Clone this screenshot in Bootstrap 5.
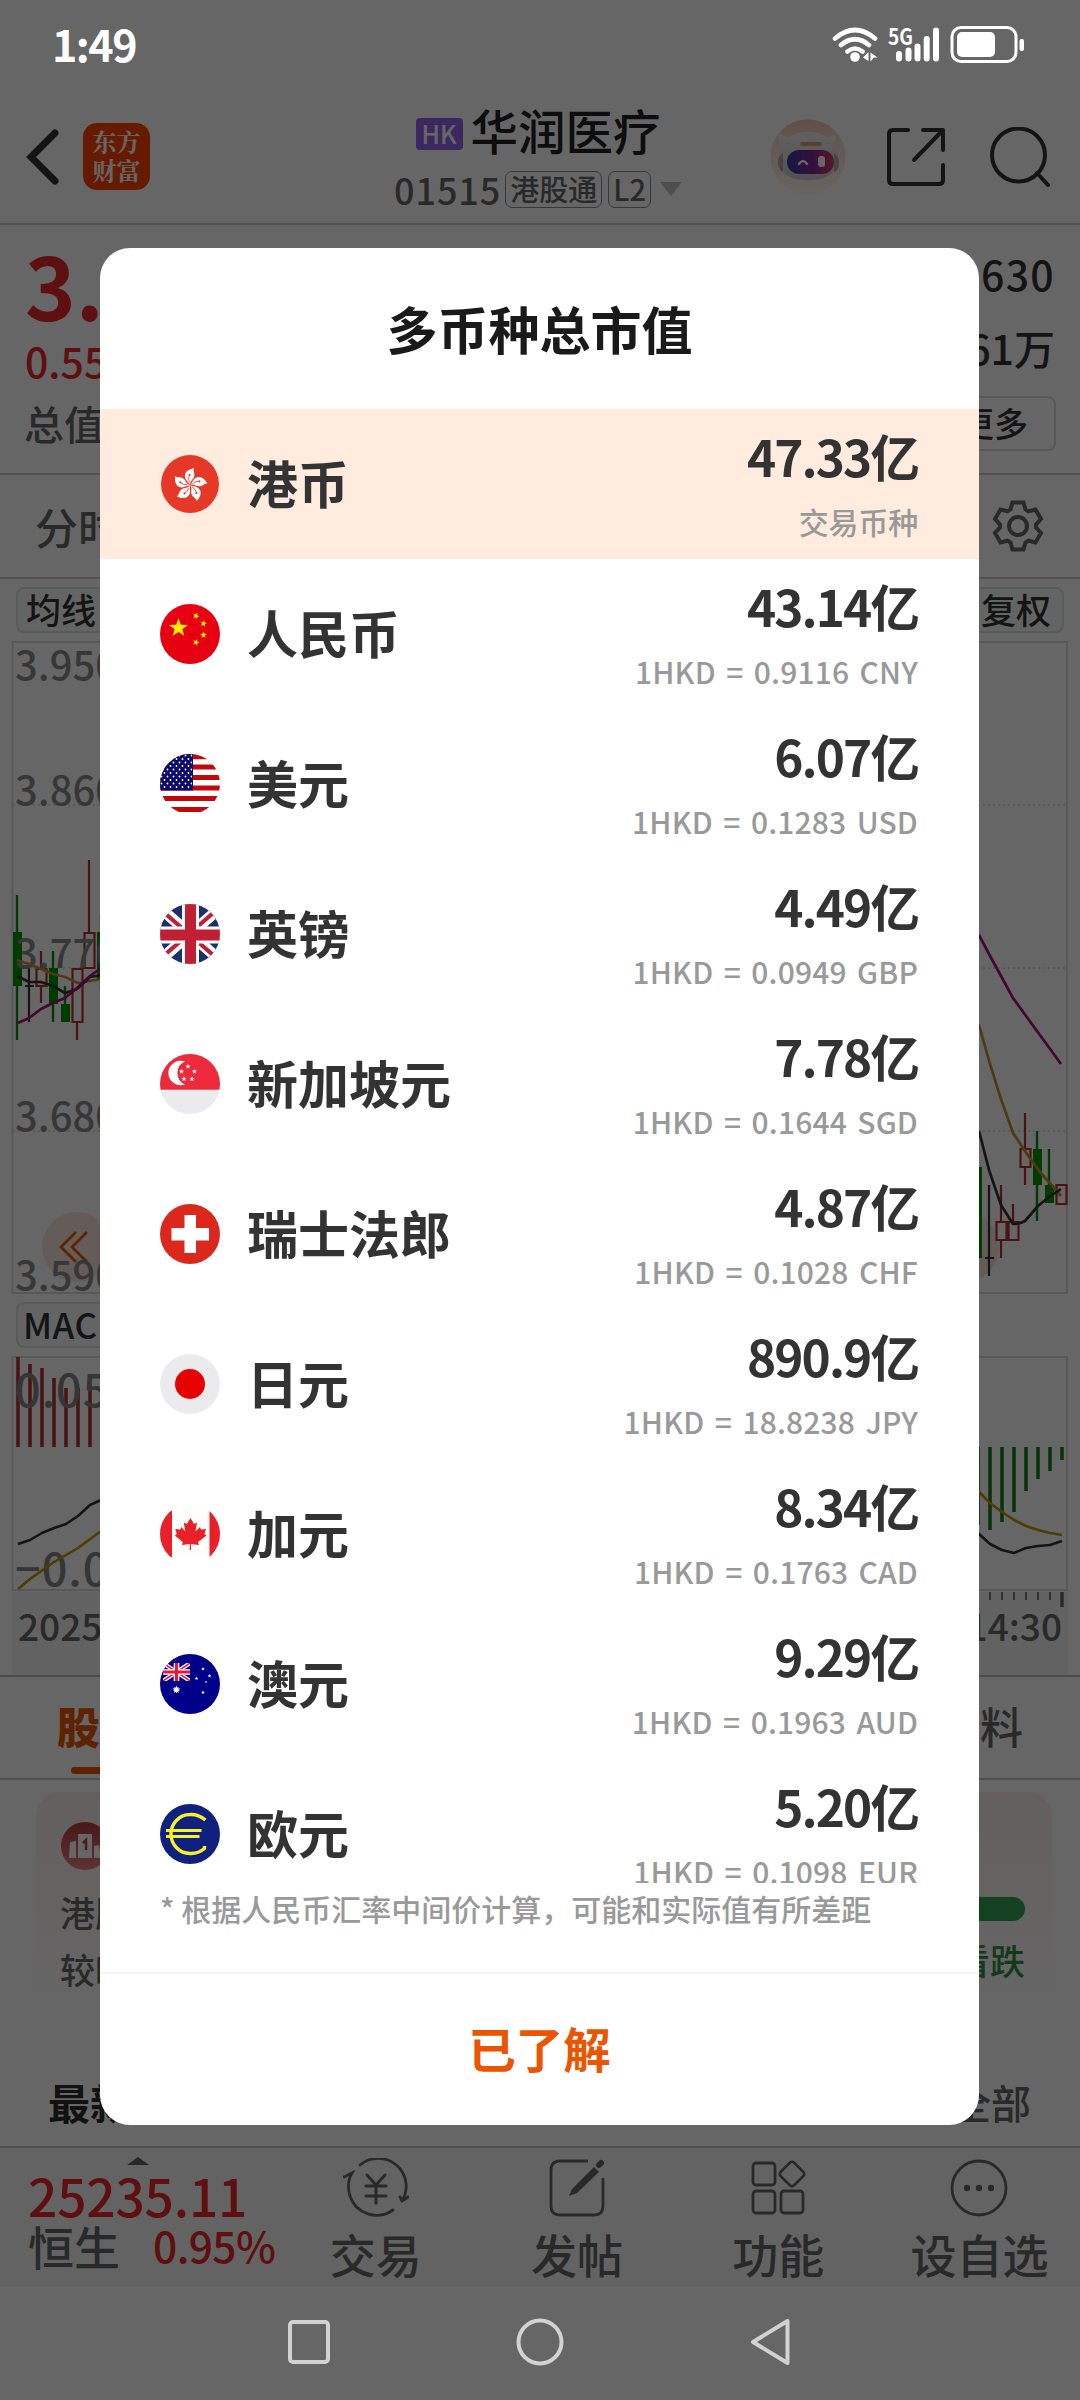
<!DOCTYPE html>
<html lang="zh-CN">
<head>
<meta charset="utf-8">
<meta name="viewport" content="width=1080">
<title>多币种总市值</title>
<link href="https://cdn.jsdelivr.net/npm/bootstrap@5.3.0/dist/css/bootstrap.min.css" rel="stylesheet">
<style>
  html, body { margin: 0; overflow: hidden; }
  body { width: 1080px; height: 2400px; font-family: "Noto Sans CJK SC", sans-serif; font-weight: 500; color: #333; background: #fff; }
  svg { display: block; flex: none; }
  svg text { font-family: "Noto Sans CJK SC", sans-serif; font-weight: 500; }
  .screen { width: 1080px; height: 2400px; overflow: hidden; }
  .soft { color: #666; }
  .up { color: #ea2626; }
  .line-b { border-bottom: 2px solid #ccc; }

  .status { height: 95px; padding: 0 56px 0 52px; z-index: 5; color: #fff; }
  .clock { font-size: 43px; font-weight: 700; line-height: 60px; letter-spacing: -1.5px; margin-top: -9px; }

  .app-head { height: 130px; margin-top: 95px; padding: 0 30px 5px 26px; }
  .head-left, .head-right { width: 300px; }
  .brand { width: 67px; height: 67px; border-radius: 14px; background: #ff4400; color: #fff; font-family: "Noto Serif CJK SC", "Noto Sans CJK SC", serif; font-weight: 700; font-size: 24px; line-height: 29px; text-align: center; padding-top: 3px; margin-left: 24px; }
  .hk-tag { background: #9763ee; border-radius: 4px; width: 47px; height: 32px; line-height: 31px; font-size: 25px; color: #fff; text-align: center; }
  .stock-name { font-size: 47.5px; line-height: 56px; margin-top: -8px; color: #222; }
  .code-no { font-size: 36px; line-height: 40px; letter-spacing: .9px; }
  .mini-tag { border: 1.5px solid #8c8c8c; border-radius: 7px; height: 37px; line-height: 32px; font-size: 29px; padding: 0 4px; }

  .quote { height: 250px; padding: 0 25px; }
  .price { font-size: 86px; font-weight: 700; line-height: 84px; padding-top: 17px; }
  .change { font-size: 41px; line-height: 60px; padding-top: 4px; }
  .total { font-size: 40px; line-height: 60px; margin-top: 3px; margin-left: -1px; }
  .q-right { font-size: 41px; line-height: 74px; padding-top: 11px; }
  .more-btn { border: 2px solid #ddd; border-radius: 8px; width: 150px; height: 55px; line-height: 50px; font-size: 34px; margin: 12px -1px 0 0; padding-right: 26px; }
  .period { height: 104px; padding: 0 36px 0 35px; font-size: 43px; }
  .pills { height: 62px; padding: 8px 16px 0; }
  .pills-macd { height: 60px; padding: 6px 16px 0; }
  .chip { border: 2px solid #dfe2e2; background: #f8f9f9; border-radius: 8px; height: 46px; line-height: 40px; font-size: 35px; padding: 0 11px 0 8px; }
  .dates { height: 83px; margin: 0 12px; padding: 8px 6px 0; background: #f5f5f5; font-size: 37px; line-height: 50px; }
  .tabs { height: 105px; border-top: 2px solid #bbb; border-bottom: 2px solid #c4c4c4; padding: 0 57px; font-size: 43px; }
  .tab-on { color: #ea5504; font-weight: 700; }
  .tab-on span { display: block; width: 60px; height: 7px; border-radius: 4px; background: #ea5504; margin: 12px 0 0 14px; }
  .tab-on b { display: block; line-height: 60px; margin-top: 18px; }
  .insight { margin: 12px 28px 0 36px; height: 240px; border-radius: 24px; background: linear-gradient(#fbeeec, #fff 92%); padding: 30px 27px 0 25px; }
  .insight-text { font-size: 35px; line-height: 57px; margin-top: 13px; margin-left: -1px; }
  .fall-bar { width: 190px; height: 24px; border-radius: 0 12px 12px 0; background: #34a353; margin: 75px 0 0; }
  .fall { font-size: 35px; line-height: 50px; color: #2e9048; margin-top: 14px; }
  .news { height: 114px; padding: 40px 49px 0 48px; font-size: 42px; line-height: 60px; }

  .dock { height: 141px; border-top: 2px solid #c8c8c8; background: #f8f8f8; }
  .index-box { width: 275px; padding-left: 28px; }
  .index-no { font-size: 51.5px; line-height: 54px; letter-spacing: -.2px; margin-top: 3px; }
  .index-row { font-size: 46px; line-height: 50px; margin-top: -2px; white-space: nowrap; }
  .index-row .up { font-size: 42.5px; margin-left: 33px; letter-spacing: -.6px; }
  .dock-item { width: 201.4px; font-size: 46px; line-height: 56px; padding-top: 10px; }
  .dock-item svg { margin-bottom: 7px; }

  .veil { background: rgba(0,0,0,.6); z-index: 2; }
  .dialog-wrap { padding: 248px 101px 0 100px; z-index: 4; }
  .sheet { height: 1877px; border-radius: 30px; background: #fff; overflow: hidden; }
  .sheet-title { height: 161px; line-height: 160px; font-size: 51px; font-weight: 700; color: #1a1a1a; }
  .fx-list { height: 1474px; overflow: hidden; }
  .fx { height: 150px; padding: 13px 61px 5px 60px; flex: none; }
  .fx-on { background: #ffecdf; }
  .fx-name { font-size: 51px; font-weight: 700; line-height: 60px; margin: -12px 0 0 27px; }
  .fx-flag { margin-top: -8px; }
  .fx-val { font-size: 49.5px; font-weight: 700; line-height: 66px; letter-spacing: -1.9px; padding-top: 1px; height: 66px; }
  .fx-sub { font-size: 30px; line-height: 66px; color: #999; font-weight: 500; letter-spacing: .15px; word-spacing: 3.5px; }
  .note { height: 91px; padding: 1px 60px 0; font-size: 30px; line-height: 48px; color: #999; border-bottom: 2px solid #f5f5f5; white-space: nowrap; }
  .ok { height: 151px; line-height: 147px; font-size: 47.5px; font-weight: 700; color: #ea5504; }

  .sysnav { height: 115px; padding: 0 288px; z-index: 5; bottom: 1px; }
</style>
</head>
<body>
<div class="screen position-relative">

  <div class="status position-absolute top-0 start-0 w-100 d-flex justify-content-between align-items-center">
    <div class="clock">1:49</div>
    <svg width="192" height="40" viewBox="832 25 192 40" style="margin-top:-6px">
      <g fill="none" stroke="#fff" stroke-linecap="round" stroke-width="4.6">
        <path d="M835 38.500Q855 21.500 875 38.500M841 45Q855 33.500 869 45M847.500 51.500Q855 45.500 862.500 51.500"/>
      </g>
      <circle cx="855" cy="57" r="4.800" fill="#fff"/>
      <path d="M863 57.500l5.500-5.500v9zM870.500 52.500l7 5h-3.500l-3.500 4z" fill="#fff"/>
      <text x="888" y="44.500" font-size="22" style="font-weight:700" fill="#fff" textLength="25" lengthAdjust="spacingAndGlyphs">5G</text>
      <g stroke="#fff" stroke-width="6" stroke-linecap="round"><path d="M899 54v4.500M908.500 50.500v8M917.500 46.500v12M926.700 39v19.500M936 30.500v28"/></g>
      <rect x="952" y="27.500" width="64" height="34" rx="9" fill="none" stroke="#fff" stroke-width="3"/>
      <rect x="957" y="32" width="38" height="25" rx="5" fill="#fff"/>
      <rect x="1019.500" y="39" width="4.500" height="12" rx="2" fill="#fff"/>
    </svg>
  </div>

  <header class="app-head line-b d-flex align-items-center justify-content-between">
    <div class="head-left d-flex align-items-center">
      <svg width="33" height="56" viewBox="0 0 33 56"><path d="M29 4L5 28l24 24" fill="none" stroke="#333" stroke-width="7" stroke-linecap="round"/></svg>
      <div class="brand">东方<br>财富</div>
    </div>
    <div class="d-flex flex-column align-items-center" style="padding-top:6px">
      <div class="d-flex align-items-center gap-2"><span class="hk-tag">HK</span><span class="stock-name">华润医疗</span></div>
      <div class="d-flex align-items-center soft" style="margin-top:11px">
        <span class="code-no">01515</span><span class="mini-tag ms-1">港股通</span><span class="mini-tag" style="margin-left:6px">L2</span>
        <svg width="22" height="14" viewBox="0 0 22 14" style="margin-left:9px"><path d="M0 0h22l-11 14z" fill="#c4c4c4"/></svg>
      </div>
    </div>
    <div class="head-right d-flex align-items-center justify-content-end">
      <svg width="76" height="76" viewBox="0 0 76 76" style="margin-right:41px">
        <defs><linearGradient id="halo" x2="0" y2="1"><stop stop-color="#f5c4ae"/><stop offset="1" stop-color="#ffefe8" stop-opacity=".5"/></linearGradient>
        <linearGradient id="visor"><stop stop-color="#3c3aa8"/><stop offset=".55" stop-color="#7d2a98"/><stop offset="1" stop-color="#d63b60"/></linearGradient>
        <linearGradient id="shell" x2="0" y2="1"><stop stop-color="#f4f0f0"/><stop offset="1" stop-color="#cfc8ca"/></linearGradient></defs>
        <circle cx="38" cy="38" r="37.500" fill="url(#halo)"/>
        <path d="M9 15q6 2 10 3q8-5 19-5t19 5q5-1 8-3q3 8-2 14q7 6 6 19l-6 4q-5 9-25 9t-25-9q-5-1-5-6q0-10 5-16q-6-6-4-15z" fill="url(#shell)"/>
        <path d="M8 43q0-6 5-9v19q-5-2-5-10zM69 43q0-6-5-9v19q5-2 5-10z" fill="#b0abb0"/>
        <rect x="30" y="23" width="22" height="4" rx="2" fill="#dca078"/>
        <rect x="17" y="31" width="47" height="24" rx="12" fill="url(#visor)"/>
        <path d="M29 45q4-6 8 0" fill="none" stroke="#fff" stroke-width="2.500" stroke-linecap="round"/>
        <rect x="48" y="37" width="7" height="11" rx="3" fill="#fff"/>
      </svg>
      <svg width="58" height="60" viewBox="0 0 58 60" style="margin-right:45px" fill="none" stroke="#333" stroke-width="4" stroke-linecap="round" stroke-linejoin="round"><path d="M21 3H6q-4 0-4 4v46q0 4 4 4h46q4 0 4-4V38M36 3h20v20M55 4L27 33"/></svg>
      <svg width="60" height="60" viewBox="0 0 60 60" fill="none" stroke="#333" stroke-width="4" stroke-linecap="round"><circle cx="28.500" cy="28" r="26.500"/><path d="M47 46l11 12"/></svg>
    </div>
  </header>

  <section class="quote line-b d-flex justify-content-between">
    <div>
      <div class="price up">3.68</div>
      <div class="change up">0.55%</div>
      <div class="total soft">总值</div>
    </div>
    <div class="q-right text-end">
      <div style="letter-spacing:1.3px">.630</div>
      <div>61万</div>
      <div class="more-btn">更多</div>
    </div>
  </section>

  <section class="period line-b d-flex justify-content-between align-items-center soft">
    <span>分时</span>
    <svg width="52" height="52" viewBox="-26 -26 52 52" fill="none" stroke="#666" stroke-width="4" stroke-linejoin="miter">
      <path d="M-5.500-23.500H5.500L7.500-16.500L10.500-14.700L17.500-16.500L23-7L18-1.500V1.500L23 7L17.500 16.500L10.500 14.700L7.500 16.500L5.500 23.500H-5.500L-7.500 16.500L-10.500 14.700L-17.500 16.500L-23 7L-18 1.500V-1.500L-23-7L-17.500-16.500L-10.500-14.700L-7.500-16.500Z"/><circle r="9"/>
    </svg>
  </section>

  <div class="pills d-flex justify-content-between align-items-start"><span class="chip">均线</span><span class="chip" style="padding-left:30px">复权</span></div>
  <svg width="1080" height="655" viewBox="0 641 1080 655">
    <rect x="12.500" y="642" width="1054.500" height="651" fill="none" stroke="#dcdcdc" stroke-width="2"/>
    <path d="M13 805H1066M13 968H1066M13 1131H1066" stroke="#d9d9d9" stroke-width="1.500" stroke-dasharray="2 3"/>
    <circle cx="77" cy="1247" r="35" fill="#fbe7de"/><circle cx="964" cy="1247" r="35" fill="#fbe7de"/>
    <path d="M76 1232l-15 15l15 15M87 1232l-15 15l15 15" fill="none" stroke="#ea5504" stroke-width="2.800"/>
    <g fill="#009600" stroke="#009600" stroke-width="2.400">
      <path d="M17 895V1040M53 951V1022M65 986V1022M101 915V990M980 1167V1258M1037 1131V1221M1049 1149V1203"/>
      <path stroke="none" d="M13 932h9v54h-9zM49 968h9v36h-9zM61 1004h9v18h-9zM97 932h9v48h-9zM973 1167h9v91h-9zM1033 1149h9v36h-9zM1045 1185h9v18h-9z"/>
    </g>
    <g fill="none" stroke="#b83030" stroke-width="2.200">
      <path d="M41 951v17M41 987v16M77 1022v18M89 860v72M1001 1185v36M1001 1240v18M1013 1204v17M1025 1113v36M1025 1167v18"/>
      <path d="M36.500 969h10v17h-10zM72.500 969h10v53h-10zM84.500 933h10v35h-10zM996.500 1222h10v18h-10zM1008.500 1222h10v18h-10zM1020.500 1149h10v18h-10zM1056.500 1185h10v19h-10z"/>
    </g>
    <path d="M29 968V1022M25 986H34M989 1185V1276M985 1258H994" stroke="#333" stroke-width="2.200"/>
    <g font-size="40" fill="#8b8b8b"><text x="15" y="680">3.950</text><text x="15" y="805">3.860</text><text x="15" y="968">3.770</text><text x="15" y="1131">3.680</text><text x="15" y="1290">3.590</text></g>
    <g fill="none" stroke-width="2.700" stroke-linejoin="round">
      <path stroke="#c3912f" d="M17 960L29 964L41 969L53 974L65 977L78 983L90 981L101 979M979 1025L990 1064L1001 1099L1013 1133L1027 1154L1040 1172L1061 1196"/>
      <path stroke="#333" d="M17 976L29 982L41 982L53 986L65 993L77 989L90 977L101 975M979 1131L989 1170L1001 1205L1013 1224Q1020 1224 1025 1221L1038 1206L1049 1197L1061 1189"/>
      <path stroke="#a81080" d="M18 1023L29 1018L41 1009L53 1003L65 998L77 988L90 976L101 968M979 935L989 954L1013 998L1061 1064"/>
    </g>
  </svg>
  <div class="pills-macd d-flex"><span class="chip" style="padding-left:5px;letter-spacing:.5px">MACD</span></div>
  <svg class="position-relative" width="1080" height="236" viewBox="0 1356 1080 236" style="overflow:visible">
    <rect x="12.500" y="1357" width="1054.500" height="233" fill="none" stroke="#dcdcdc" stroke-width="2"/>
    <path stroke="#b93030" stroke-width="3.600" d="M18 1357V1447M30 1364V1447M42 1368V1447M54 1378V1447M66 1388V1447M78 1388V1447M90 1384V1447"/>
    <path stroke="#15841c" stroke-width="3.600" d="M978 1447V1525M990 1447V1530M1002 1447V1522M1014 1447V1512M1026 1447V1491M1038 1447V1479M1050 1447V1471M1062 1447V1460"/>
    <g font-size="45" fill="#858585" letter-spacing="1"><text x="15" y="1407">0.05</text><text x="15" y="1586">−0.04</text></g>
    <g fill="none" stroke-width="2.600" stroke-linejoin="round">
      <path stroke="#333" d="M18 1544L30 1540L42 1533L54 1528L66 1524L78 1516L90 1505L101 1500M978 1533L990 1544L1002 1550L1014 1553L1026 1548L1038 1546L1050 1545L1062 1541"/>
      <path stroke="#c29400" d="M18 1589L30 1579L54 1562L78 1548L101 1531M978 1491L990 1503L1002 1512L1014 1520L1026 1526L1038 1530L1050 1533L1062 1535"/>
    </g>
    <path stroke="#777" stroke-width="2" d="M990 1592v8M1002 1592v8M1014 1592v8M1026 1592v8M1038 1592v8M1050 1592v8"/><path stroke="#666" stroke-width="3.500" d="M1062 1592v15"/>
  </svg>
  <div class="dates d-flex justify-content-between soft"><span>2025</span><span>14:30</span></div>

  <nav class="tabs d-flex justify-content-between soft">
    <div class="tab-on"><b>股</b><span></span></div>
    <div style="line-height:60px;padding-top:18px">料</div>
  </nav>

  <section class="insight d-flex justify-content-between soft">
    <div>
      <svg width="48" height="48" viewBox="0 0 48 48"><defs><linearGradient id="rose" x2="0" y2="1"><stop stop-color="#b83a3a"/><stop offset="1" stop-color="#e88080"/></linearGradient></defs><circle cx="24" cy="24" r="24" fill="url(#rose)"/><path d="M17 12h14v24H17zM9 20l6-1v17H8zM33 24l5-1 2 13h-7z" fill="#fff"/><path d="M22 21l3-3v10" fill="none" stroke="#c44" stroke-width="2.500"/></svg>
      <div class="insight-text">港股<br>较昨</div>
    </div>
    <div class="text-end"><div class="fall-bar"></div><div class="fall">看跌</div></div>
  </section>
  <section class="news d-flex justify-content-between"><b style="color:#2c2c2c">最新</b><span class="soft" style="font-size:40px">全部</span></section>

  <nav class="dock d-flex soft">
    <div class="index-box">
      <svg width="22" height="8" viewBox="0 0 22 8" style="margin:9px 0 0 99px"><path d="M0 8L11 0l11 8z" fill="#666"/></svg>
      <div class="index-no up">25235.11</div>
      <div class="index-row d-flex"><span>恒生</span><span class="up">0.95%</span></div>
    </div>
    <div class="dock-item d-flex flex-column align-items-center">
      <svg width="66" height="60" viewBox="-33 -30 66 60" fill="none" stroke="#666" stroke-width="2.800" stroke-linecap="round"><path d="M-16-23A28 28 0 0 1 26 13L32 9M-26 8Q-30-5-24-15L-32-11M-26 8A28 28 0 0 0 17 22M26 13L24 9"/><path d="M-9-13L0-3L9-13M0-3V15M-10-2H10M-10 8H10" stroke-width="3"/></svg>
      交易</div>
    <div class="dock-item d-flex flex-column align-items-center">
      <svg width="56" height="60" viewBox="0 0 56 60" fill="none" stroke="#666" stroke-width="2.800"><path d="M39 3H11Q2 3 2 12V48Q2 57 11 57H45Q54 57 54 48V20"/><path d="M20 38l3-7L45 9l5 5L28 35z" fill="#666" stroke="none"/><path d="M50 7l2-2" stroke-width="6" stroke-linecap="round"/></svg>
      发帖</div>
    <div class="dock-item d-flex flex-column align-items-center">
      <svg width="56" height="60" viewBox="0 0 56 60" fill="none" stroke="#666" stroke-width="2.800"><rect x="3" y="5" width="22" height="22" rx="3"/><rect x="3" y="33" width="22" height="22" rx="3"/><rect x="31" y="33" width="22" height="22" rx="3"/><rect x="32.500" y="6.500" width="19" height="19" rx="3" transform="rotate(45 42 16)"/></svg>
      功能</div>
    <div class="dock-item d-flex flex-column align-items-center">
      <svg width="60" height="60" viewBox="-30 -30 60 60" fill="none" stroke="#666" stroke-width="2.800"><circle r="27"/><g fill="#666" stroke="none"><circle cx="-12" r="3.200"/><circle r="3.200"/><circle cx="12" r="3.200"/></g></svg>
      设自选</div>
  </nav>

  <div class="veil position-absolute top-0 start-0 w-100 h-100"></div>

  <div class="dialog-wrap position-absolute top-0 start-0 w-100">
    <div class="sheet d-flex flex-column" role="dialog">
      <div class="sheet-title text-center">多币种总市值</div>
      <div class="fx-list d-flex flex-column">
        <svg width="0" height="0" class="position-absolute"><defs>
          <clipPath id="disc"><circle cx="30" cy="30" r="30"/></clipPath>
          <path id="star" d="M0-10L2.350-3.240L9.510-3.090L3.800 1.240L5.880 8.090L0 4L-5.880 8.090L-3.800 1.240L-9.510-3.090L-2.350-3.240Z"/>
          <g id="petal"><path d="M0 0C-1-3-6-5-5-10.500C-4-14.500 0-16 4-17C2.500-14 5.500-11.500 4-8C3-5-.500-4 0 0Z" fill="#fff"/><path d="M-.500-3Q-2-6-1-9" fill="none" stroke="#e63827" stroke-width=".8"/><circle cx="-.500" cy="-10" r="1.100" fill="#e63827"/></g>
          <g id="jack"><rect width="60" height="60" fill="#1d2f6c"/><path d="M0 4L60 56M60 4L0 56" stroke="#fff" stroke-width="11"/><path d="M0 5L60 57M60 3L0 55" stroke="#c01f34" stroke-width="4"/><path d="M30.500 0V60M0 31H60" stroke="#fff" stroke-width="17"/><path d="M30.500 0V60M0 31H60" stroke="#c01f34" stroke-width="11"/></g>
          <pattern id="dots" width="6" height="7" patternUnits="userSpaceOnUse"><circle cx="1.500" cy="1.500" r=".9" fill="#fff"/><circle cx="4.500" cy="5" r=".9" fill="#fff"/></pattern>
        </defs></svg>

        <div class="fx fx-on d-flex align-items-center justify-content-between">
          <div class="d-flex align-items-center">
            <svg class="fx-flag" width="60" height="60"><circle cx="30" cy="30" r="29" fill="#e63827"/><g transform="translate(30 31)"><use href="#petal"/><use href="#petal" transform="rotate(72)"/><use href="#petal" transform="rotate(144)"/><use href="#petal" transform="rotate(216)"/><use href="#petal" transform="rotate(288)"/></g></svg>
            <div class="fx-name">港币</div>
          </div>
          <div class="text-end"><div class="fx-val">47.33亿</div><div class="fx-sub" style="letter-spacing:-.2px">交易币种</div></div>
        </div>

        <div class="fx d-flex align-items-center justify-content-between">
          <div class="d-flex align-items-center">
            <svg class="fx-flag" width="60" height="60"><circle cx="30" cy="30" r="30" fill="#e60012"/><g fill="#ffee00"><use href="#star" transform="translate(18.500 24)"/><use href="#star" transform="translate(36 12) rotate(20) scale(.36)"/><use href="#star" transform="translate(43.500 19.500) rotate(10) scale(.36)"/><use href="#star" transform="translate(43.500 31) scale(.36)"/><use href="#star" transform="translate(36 38.500) rotate(20) scale(.36)"/></g></svg>
            <div class="fx-name">人民币</div>
          </div>
          <div class="text-end"><div class="fx-val">43.14亿</div><div class="fx-sub">1HKD = 0.9116 CNY</div></div>
        </div>

        <div class="fx d-flex align-items-center justify-content-between">
          <div class="d-flex align-items-center">
            <svg class="fx-flag" width="60" height="60"><g clip-path="url(#disc)"><rect width="60" height="60" fill="#fff"/><path d="M0 2.600H60M0 13H60M0 23.500H60M0 34H60M0 44.500H60M0 55.500H60" stroke="#c1080b" stroke-width="5.200"/><rect width="33" height="36.500" fill="#0b0a6b"/><rect width="32" height="35" fill="url(#dots)"/></g></svg>
            <div class="fx-name">美元</div>
          </div>
          <div class="text-end"><div class="fx-val">6.07亿</div><div class="fx-sub">1HKD = 0.1283 USD</div></div>
        </div>

        <div class="fx d-flex align-items-center justify-content-between">
          <div class="d-flex align-items-center">
            <svg class="fx-flag" width="60" height="60"><g clip-path="url(#disc)"><use href="#jack"/></g></svg>
            <div class="fx-name">英镑</div>
          </div>
          <div class="text-end"><div class="fx-val">4.49亿</div><div class="fx-sub">1HKD = 0.0949 GBP</div></div>
        </div>

        <div class="fx d-flex align-items-center justify-content-between">
          <div class="d-flex align-items-center">
            <svg class="fx-flag" width="60" height="60"><g clip-path="url(#disc)"><rect width="60" height="60" fill="#ebebed"/><rect width="60" height="35.700" fill="#ed2a3b"/><path d="M25 7.500A12.300 12.300 0 1 0 25 30.500A12.500 12.500 0 0 1 25 7.500Z" fill="#fff"/><g fill="#fff"><use href="#star" transform="translate(28 12.500) scale(.28)"/><use href="#star" transform="translate(21.500 17.500) scale(.28)"/><use href="#star" transform="translate(34.500 17.500) scale(.28)"/><use href="#star" transform="translate(24 25) scale(.28)"/><use href="#star" transform="translate(32 25) scale(.28)"/></g></g></svg>
            <div class="fx-name">新加坡元</div>
          </div>
          <div class="text-end"><div class="fx-val">7.78亿</div><div class="fx-sub">1HKD = 0.1644 SGD</div></div>
        </div>

        <div class="fx d-flex align-items-center justify-content-between">
          <div class="d-flex align-items-center">
            <svg class="fx-flag" width="60" height="60"><circle cx="30" cy="30" r="30" fill="#da291c"/><path d="M24.500 11h11.500v13h13v12.500h-13v12.500h-11.500v-12.500h-13v-12.500h13z" fill="#fff"/></svg>
            <div class="fx-name">瑞士法郎</div>
          </div>
          <div class="text-end"><div class="fx-val">4.87亿</div><div class="fx-sub">1HKD = 0.1028 CHF</div></div>
        </div>

        <div class="fx d-flex align-items-center justify-content-between">
          <div class="d-flex align-items-center">
            <svg class="fx-flag" width="60" height="60"><circle cx="30" cy="30" r="30" fill="#ebebed"/><circle cx="30" cy="30" r="15" fill="#e60000"/></svg>
            <div class="fx-name">日元</div>
          </div>
          <div class="text-end"><div class="fx-val">890.9亿</div><div class="fx-sub">1HKD = 18.8238 JPY</div></div>
        </div>

        <div class="fx d-flex align-items-center justify-content-between">
          <div class="d-flex align-items-center">
            <svg class="fx-flag" width="60" height="60"><g clip-path="url(#disc)"><rect y="6.500" width="60" height="47" fill="#fffefa"/><path d="M0 6.500h12v47H0zM49.500 6.500H60v47H49.500z" fill="#e92027"/><path d="M30.500 14l3.500 6 3-1.500-1.500 9 4.500-4.500 1 2.500 5-.5-1.500 5 2 1.500-8.500 6.500 1 3-8-1v6h-1.200v-6l-8 1 1-3-8-6.500 2-1.500-1.500-5 5 .5 1-2.500 4 4.500-1.500-9 3 1.500z" fill="#e92027"/></g></svg>
            <div class="fx-name">加元</div>
          </div>
          <div class="text-end"><div class="fx-val">8.34亿</div><div class="fx-sub">1HKD = 0.1763 CAD</div></div>
        </div>

        <div class="fx d-flex align-items-center justify-content-between">
          <div class="d-flex align-items-center">
            <svg class="fx-flag" width="60" height="60"><g clip-path="url(#disc)"><rect width="60" height="60" fill="#00008b"/><svg x="3" y="9" width="27" height="18" viewBox="0 0 27 18"><path d="M0 0L27 18M27 0L0 18" stroke="#fff" stroke-width="4"/><path d="M0 0L27 18M27 0L0 18" stroke="#e4173a" stroke-width="1.500"/><path d="M13.500 0V18M0 9H27" stroke="#fff" stroke-width="5.600"/><path d="M13.500 0V18M0 9H27" stroke="#e4173a" stroke-width="3.200"/></svg><g fill="#fff"><use href="#star" transform="translate(16.400 35.700) scale(.42)"/><use href="#star" transform="translate(16.400 35.700) rotate(36) scale(.38)"/><use href="#star" transform="translate(43 15) scale(.2)"/><use href="#star" transform="translate(49.500 22) scale(.2)"/><use href="#star" transform="translate(36.500 24.500) scale(.2)"/><use href="#star" transform="translate(46 28) scale(.13)"/><use href="#star" transform="translate(43 38.500) scale(.2)"/></g></g></svg>
            <div class="fx-name">澳元</div>
          </div>
          <div class="text-end"><div class="fx-val">9.29亿</div><div class="fx-sub">1HKD = 0.1963 AUD</div></div>
        </div>

        <div class="fx d-flex align-items-center justify-content-between">
          <div class="d-flex align-items-center">
            <svg class="fx-flag" width="60" height="60"><circle cx="30" cy="30" r="30" fill="#10207f"/><path d="M45.500 16Q38 10 30 10.500A19 19.500 0 0 0 30 49.500Q38 50 44.500 44.500V42" fill="none" stroke="#f8f02c" stroke-width="3.400"/><path d="M6 26.500H41.500M6 32.500H39.500" stroke="#f8f02c" stroke-width="2.800"/></svg>
            <div class="fx-name">欧元</div>
          </div>
          <div class="text-end"><div class="fx-val">5.20亿</div><div class="fx-sub">1HKD = 0.1098 EUR</div></div>
        </div>
      </div>
      <div class="note">* 根据人民币汇率中间价计算，可能和实际值有所差距</div>
      <div class="ok text-center">已了解</div>
    </div>
  </div>

  <div class="sysnav position-absolute start-0 w-100 d-flex justify-content-between align-items-center">
    <svg width="42" height="44" viewBox="0 0 42 44" fill="none" stroke="#d2d2d2" stroke-width="4"><rect x="2" y="2" width="38" height="40" rx="3"/></svg>
    <svg width="48" height="48" viewBox="0 0 48 48" fill="none" stroke="#d2d2d2" stroke-width="4"><circle cx="24" cy="24" r="21.500"/></svg>
    <svg width="42" height="48" viewBox="0 0 42 48" fill="none" stroke="#d2d2d2" stroke-width="4" stroke-linejoin="round"><path d="M37.500 3V45L3 24z"/></svg>
  </div>
</div>
<script src="https://cdn.jsdelivr.net/npm/bootstrap@5.3.0/dist/js/bootstrap.bundle.min.js"></script>
</body>
</html>
